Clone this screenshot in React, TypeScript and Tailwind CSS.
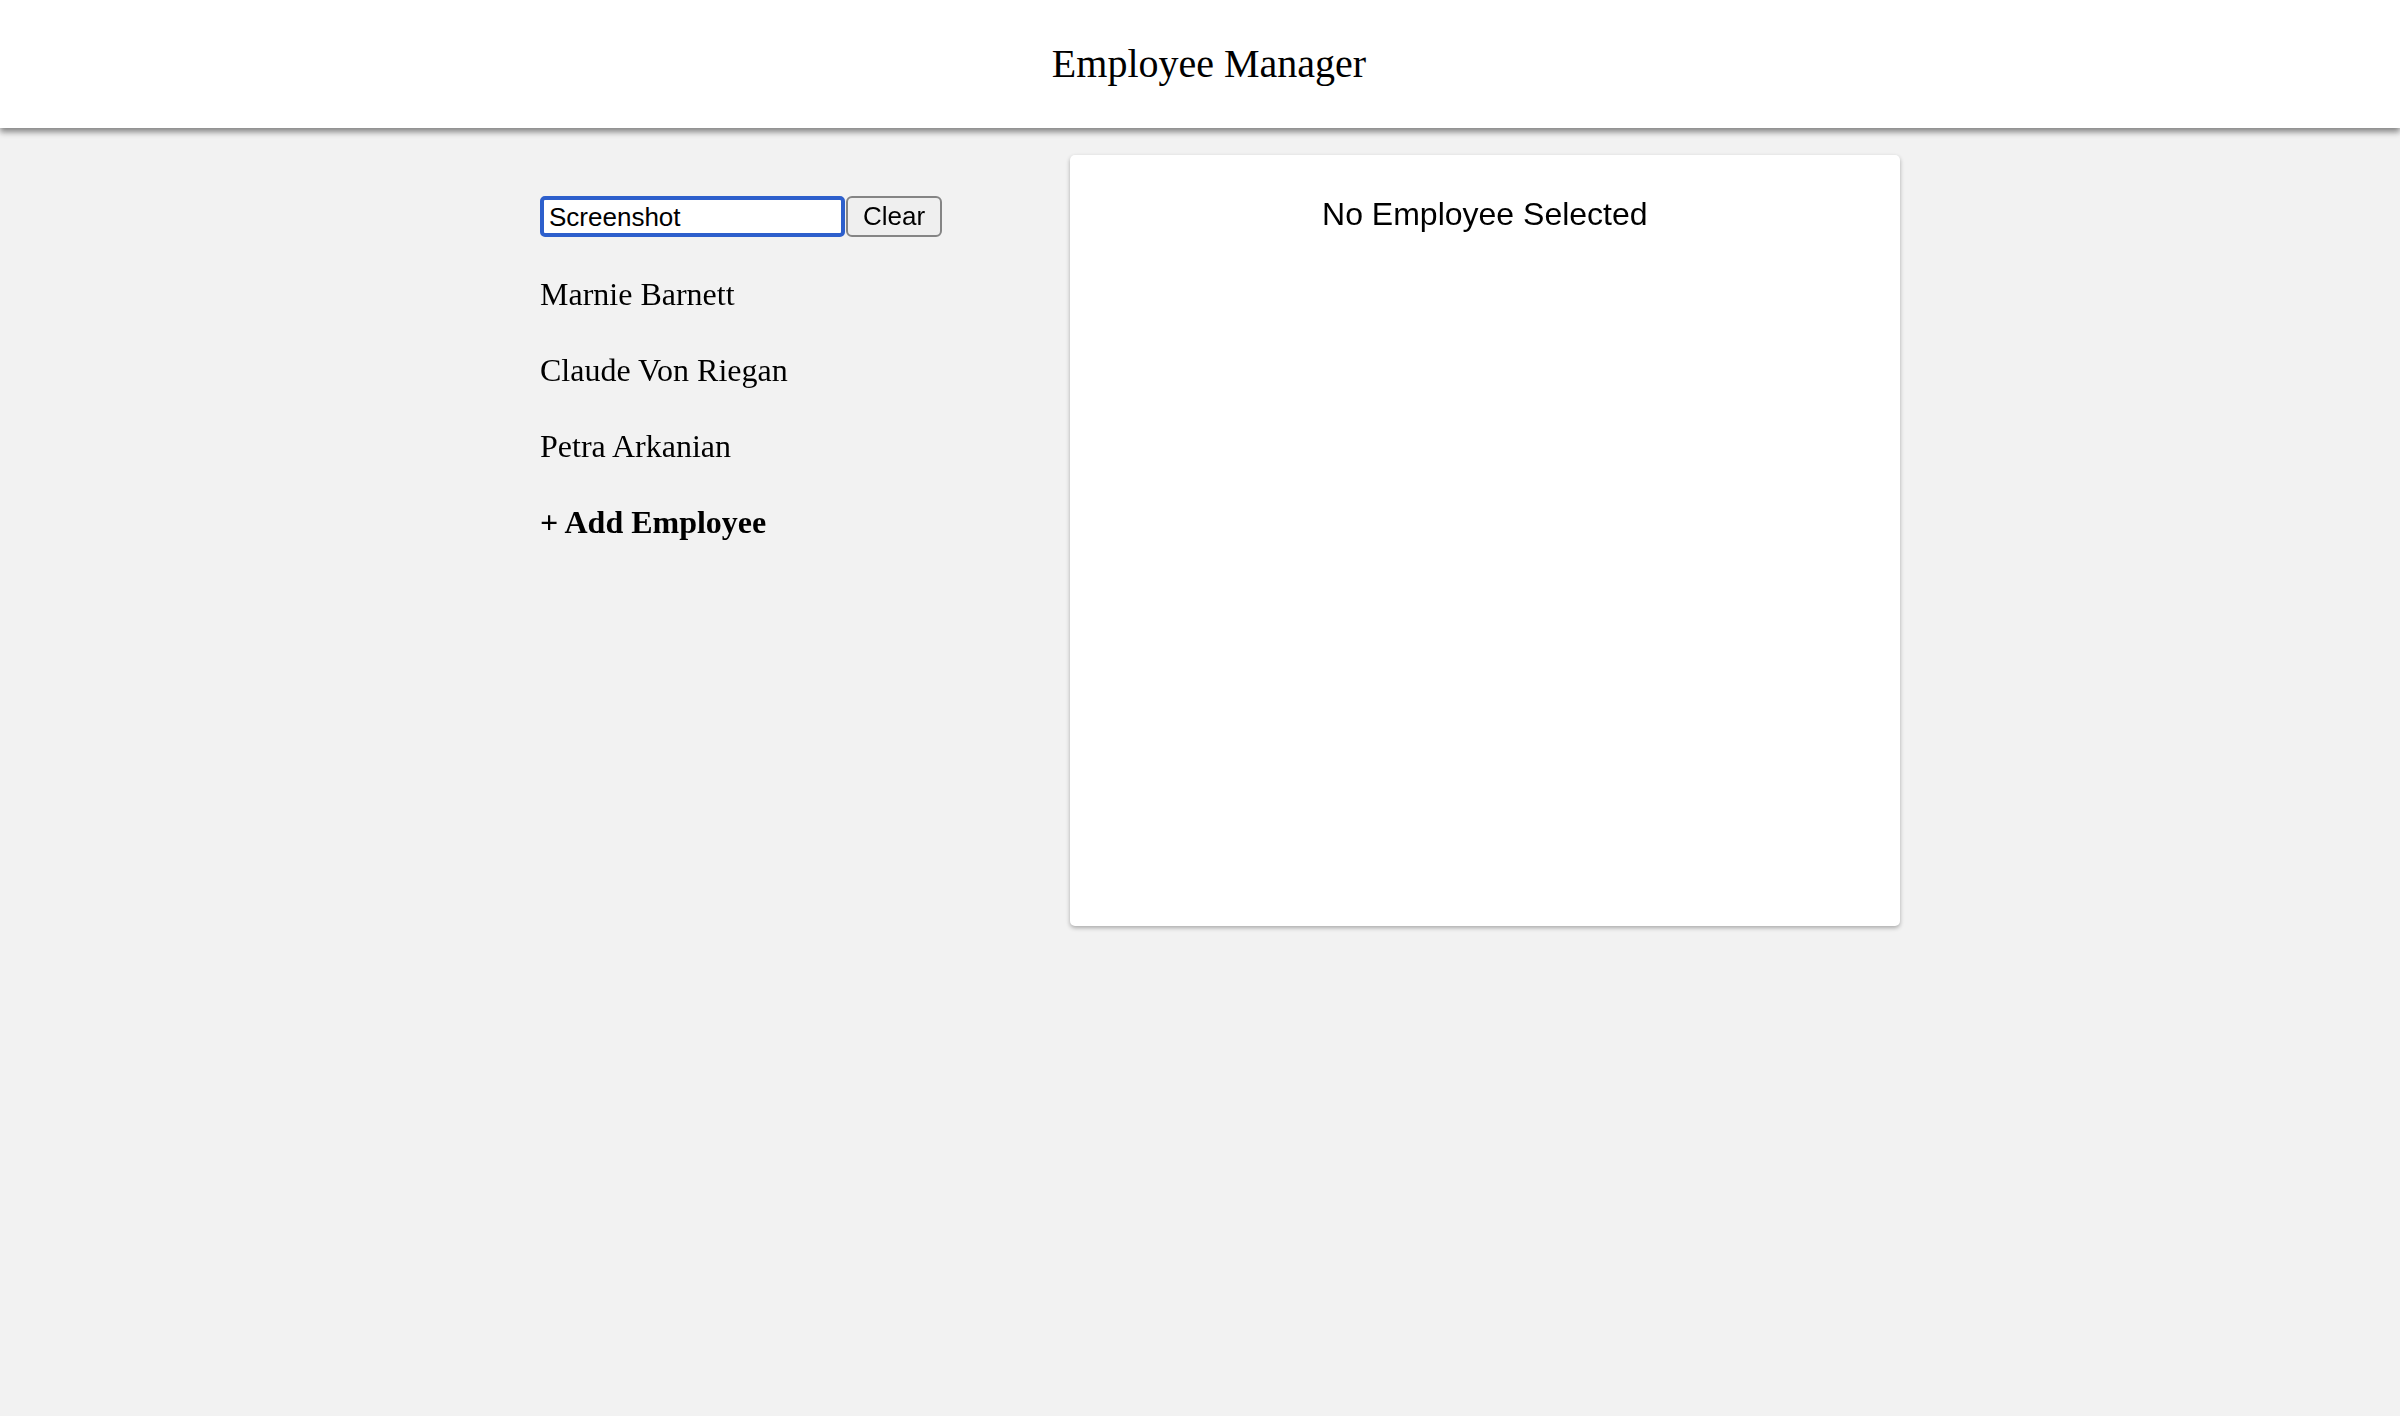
import { useState } from 'react';

const employees = ['Marnie Barnett', 'Claude Von Riegan', 'Petra Arkanian'];

export default function App() {
  const [query, setQuery] = useState('Screenshot');

  return (
    <div className="min-h-[1416px] bg-[#f2f2f2] text-black">
      {/* Header */}
      <header className="relative z-10 h-[128px] bg-white shadow-[0_4px_6px_rgba(0,0,0,0.45)] flex items-center justify-center pl-[18px]">
        <h1 className="font-['Liberation_Serif',serif] text-[40px] leading-[126px] font-normal">
          Employee Manager
        </h1>
      </header>

      <main className="mx-auto w-[1400px] flex pt-[27px]">
        {/* Sidebar */}
        <div className="w-[570px] pl-[40px] pt-[41px] flex flex-col gap-[37px]">
          <div className="flex items-center gap-px h-[41px]">
            <input
              autoFocus
              value={query}
              onChange={(e) => setQuery(e.target.value)}
              className="w-[305px] h-[41px] rounded-[5px] border-[4px] border-[#2d5fcc] bg-white px-[5px] pt-[2px] font-['Liberation_Sans',Arial,sans-serif] text-[26px] leading-[33px] outline-none"
            />
            <button
              onClick={() => setQuery('')}
              className="w-[96px] h-[41px] rounded-[6px] border-2 border-[#858585] bg-[#efefef] font-['Liberation_Sans',Arial,sans-serif] text-[26px] leading-[37px]"
            >
              Clear
            </button>
          </div>

          <ul className="flex flex-col gap-[36px] font-['Liberation_Serif',serif] text-[32px] leading-[40px]">
            {employees.map((name) => (
              <li key={name} className="cursor-pointer">
                {name}
              </li>
            ))}
            <li className="font-bold cursor-pointer">+ Add Employee</li>
          </ul>
        </div>

        {/* Detail card */}
        <section className="w-[831px] h-[771px] bg-white rounded-[5px] shadow-[0_2px_4px_rgba(0,0,0,0.3)] pt-[39px]">
          <h2 className="text-center font-['Liberation_Sans',Arial,sans-serif] text-[32px] leading-[40px] font-normal">
            No Employee Selected
          </h2>
        </section>
      </main>
    </div>
  );
}
